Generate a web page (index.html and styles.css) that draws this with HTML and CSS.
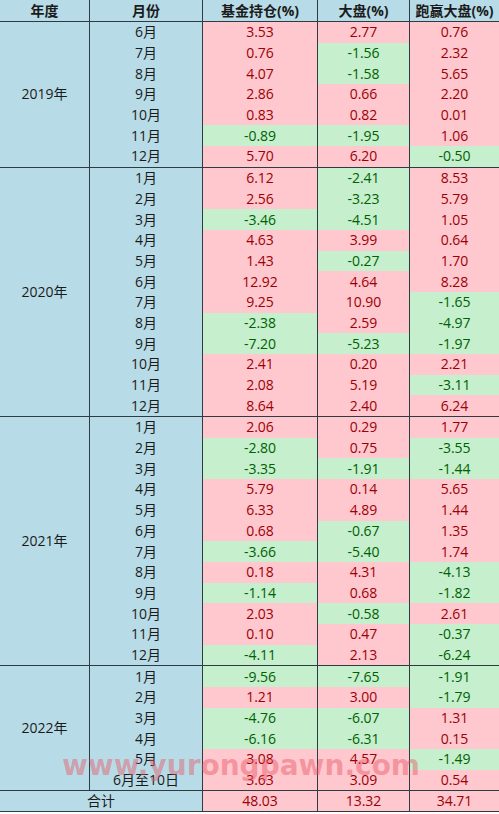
FILE: index.html
```html
<!DOCTYPE html>
<html lang="zh-CN">
<head>
    <meta charset="UTF-8">
    <meta name="viewport" content="width=device-width, initial-scale=1.0">
    <title>基金持仓 vs 大盘</title>
    <link rel="stylesheet" href="styles.css">
</head>
<body>
    <div class="sheet">
        <div class="row head">
            <div class="cell">年度</div>
            <div class="cell">月份</div>
            <div class="cell">基金持仓(%)</div>
            <div class="cell">大盘(%)</div>
            <div class="cell end">跑赢大盘(%)</div>
        </div>
        <div id="groups"></div>
        <div class="row total">
            <div class="cell">合计</div>
            <div class="cell pos">48.03</div>
            <div class="cell pos">13.32</div>
            <div class="cell pos end">34.71</div>
        </div>
        <div class="watermark">www.yurongpawn.com</div>
    </div>

    <script>
        const data = [
            ['2019年', [
                ['6月', 3.53, 2.77, 0.76],
                ['7月', 0.76, -1.56, 2.32],
                ['8月', 4.07, -1.58, 5.65],
                ['9月', 2.86, 0.66, 2.20],
                ['10月', 0.83, 0.82, 0.01],
                ['11月', -0.89, -1.95, 1.06],
                ['12月', 5.70, 6.20, -0.50]
            ]],
            ['2020年', [
                ['1月', 6.12, -2.41, 8.53],
                ['2月', 2.56, -3.23, 5.79],
                ['3月', -3.46, -4.51, 1.05],
                ['4月', 4.63, 3.99, 0.64],
                ['5月', 1.43, -0.27, 1.70],
                ['6月', 12.92, 4.64, 8.28],
                ['7月', 9.25, 10.90, -1.65],
                ['8月', -2.38, 2.59, -4.97],
                ['9月', -7.20, -5.23, -1.97],
                ['10月', 2.41, 0.20, 2.21],
                ['11月', 2.08, 5.19, -3.11],
                ['12月', 8.64, 2.40, 6.24]
            ]],
            ['2021年', [
                ['1月', 2.06, 0.29, 1.77],
                ['2月', -2.80, 0.75, -3.55],
                ['3月', -3.35, -1.91, -1.44],
                ['4月', 5.79, 0.14, 5.65],
                ['5月', 6.33, 4.89, 1.44],
                ['6月', 0.68, -0.67, 1.35],
                ['7月', -3.66, -5.40, 1.74],
                ['8月', 0.18, 4.31, -4.13],
                ['9月', -1.14, 0.68, -1.82],
                ['10月', 2.03, -0.58, 2.61],
                ['11月', 0.10, 0.47, -0.37],
                ['12月', -4.11, 2.13, -6.24]
            ]],
            ['2022年', [
                ['1月', -9.56, -7.65, -1.91],
                ['2月', 1.21, 3.00, -1.79],
                ['3月', -4.76, -6.07, 1.31],
                ['4月', -6.16, -6.31, 0.15],
                ['5月', 3.08, 4.57, -1.49],
                ['6月至10日', 3.63, 3.09, 0.54]
            ]]
        ];

        const holder = document.getElementById('groups');

        data.forEach(([year, rows]) => {
            const group = document.createElement('div');
            group.className = 'group';

            const yearCell = document.createElement('div');
            yearCell.className = 'cell';
            yearCell.style.gridRow = `span ${rows.length}`;
            yearCell.textContent = year;
            group.appendChild(yearCell);

            rows.forEach(([month, ...nums]) => {
                const m = document.createElement('div');
                m.className = 'cell';
                m.textContent = month;
                group.appendChild(m);

                nums.forEach((n, i) => {
                    const c = document.createElement('div');
                    c.className = 'cell ' + (n < 0 ? 'neg' : 'pos');
                    if (i === nums.length - 1) c.classList.add('end');
                    c.textContent = n.toFixed(2);
                    group.appendChild(c);
                });
            });

            holder.appendChild(group);
        });
    </script>
</body>
</html>
```

FILE: styles.css
```css
body {
    margin: 0;
    background-color: #ffffff;
    font-family: "Open Sans", "Noto Sans CJK SC", sans-serif;
    font-size: 14px;
    color: #1b1b1b;
}
.sheet {
    position: relative;
    width: 499px;
    background-color: #b8dce7;
}
.row,
.group {
    display: grid;
    grid-template-columns: 90px 113px 115px 92px 89px;
    border-bottom: 1px solid #2e3b42;
}
.group {
    grid-auto-rows: 20.7px;
}
.head {
    height: 21px;
    font-weight: bold;
}
.total {
    grid-template-columns: 203px 115px 92px 89px;
    height: 20px;
}
.cell {
    display: flex;
    align-items: center;
    justify-content: center;
    border-right: 1px solid #2e3b42;
    line-height: 1;
    white-space: nowrap;
}
.cell.end {
    border-right: none;
}
.pos {
    background-color: #ffc7ce;
    color: #9c0006;
}
.neg {
    background-color: #c6efce;
    color: #006100;
}
.watermark {
    position: absolute;
    left: 62px;
    top: 749px;
    font-family: "DejaVu Sans", sans-serif;
    font-weight: bold;
    font-size: 28px;
    color: rgba(232, 84, 100, 0.45);
    pointer-events: none;
}
```
